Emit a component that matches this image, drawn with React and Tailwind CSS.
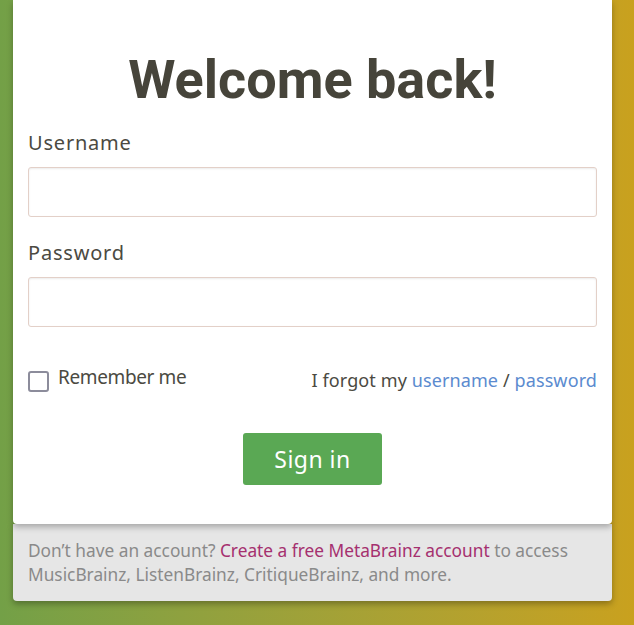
export default function App() {
  return (
    <div className="h-[625px] w-full overflow-hidden bg-gradient-to-r from-[#73a047] to-[#c9a11e]">
      <div className="ml-[13px] w-[599px] font-['Noto_Sans',sans-serif]">
        {/* Login card */}
        <div className="relative z-10 bg-white px-[15px] pt-[52px] pb-[39px] rounded-b-[4px] shadow-[0_3px_6px_rgba(0,0,0,0.28)]">
          <h1 className="text-center font-['Roboto',sans-serif] font-bold text-[54px] leading-[55px] text-[#46443a]">
            Welcome back!
          </h1>

          <label className="block mt-[22px] mb-[10px] text-[20px] leading-[28px] tracking-[0.04em] text-[#4b4a42]">
            Username
          </label>
          <input
            type="text"
            className="block w-full h-[50px] rounded-[3px] border border-[#e3d0c8] shadow-[inset_0_1px_2px_rgba(0,0,0,0.08)] outline-none"
          />

          <label className="block mt-[22px] mb-[10px] text-[20px] leading-[28px] tracking-[0.04em] text-[#4b4a42]">
            Password
          </label>
          <input
            type="password"
            className="block w-full h-[50px] rounded-[3px] border border-[#e3d0c8] shadow-[inset_0_1px_2px_rgba(0,0,0,0.08)] outline-none"
          />

          <div className="mt-[37px] flex items-start justify-between">
            <div className="flex items-start">
              <span className="mt-[7px] w-[21px] h-[21px] rounded-[3px] border-[2.5px] border-[#8c8c9b] bg-white" />
              <span className="ml-[9px] text-[19px] leading-[26px] tracking-[-0.02em] text-[#4b4a42]">
                Remember me
              </span>
            </div>
            <div className="mt-[3px] text-[18px] leading-[26px] tracking-[0.006em] text-[#4b4a42]">
              I forgot my <a className="text-[#5b8bcf]">username</a> / <a className="text-[#5b8bcf]">password</a>
            </div>
          </div>

          <div className="mt-[40px] flex justify-center">
            <button className="w-[139px] h-[52px] rounded-[3px] bg-[#5aa854] text-white text-[23px] leading-none tracking-[0.02em]">
              Sign in
            </button>
          </div>
        </div>

        {/* Footer note */}
        <div className="bg-[#e6e6e6] px-[15px] pt-[15px] pb-[14px] rounded-b-[4px] shadow-[0_3px_6px_rgba(0,0,0,0.3)] text-[17.3px] leading-[24px] text-[#8a8a8a]">
          Don’t have an account? <a className="text-[#a5306f]">Create a free MetaBrainz account</a> to access
          MusicBrainz, ListenBrainz, CritiqueBrainz, and more.
        </div>
      </div>
    </div>
  );
}
